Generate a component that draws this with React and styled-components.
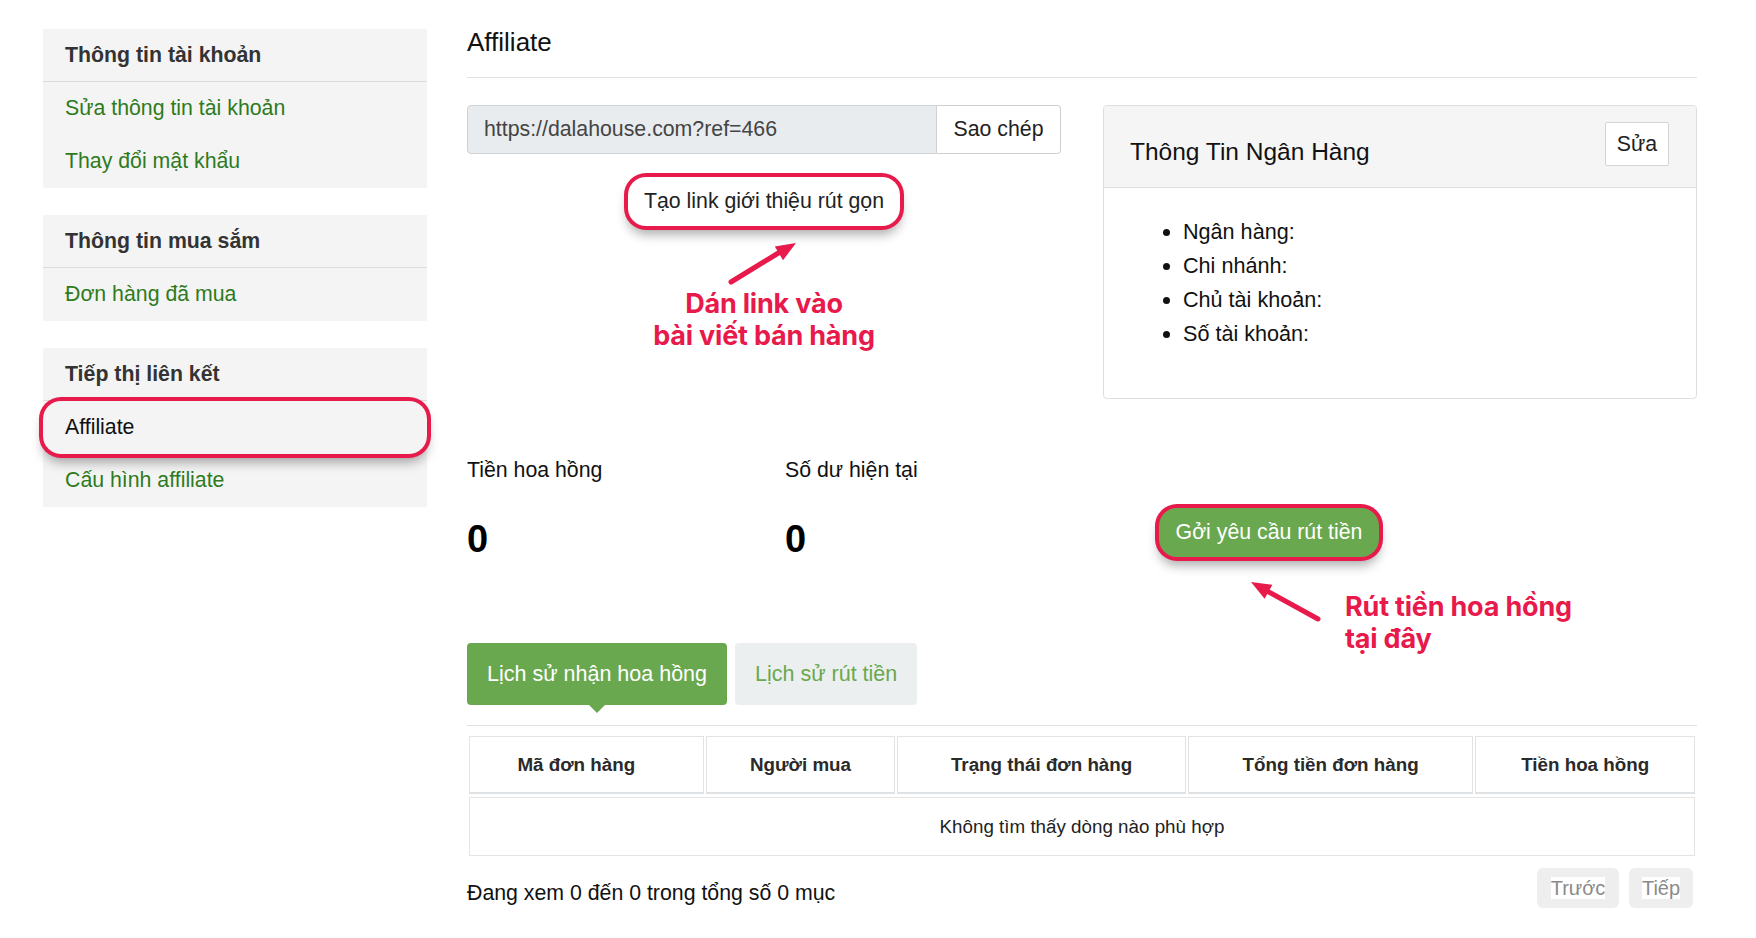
import React from "react";
import styled, { createGlobalStyle, css } from "styled-components";

const RED = "#e8194b";
const GREEN = "#6aa84f";
const LINK_GREEN = "#2e7b1c";
const BASE = "21.3px";

const GlobalStyle = createGlobalStyle`
  body {
    margin: 0;
    background: #fff;
    color: #222;
    font-family: "Liberation Sans", Arial, sans-serif;
  }
`;

const ring = css`
  box-shadow: 0 0 0 4px ${RED}, 0 8px 12px rgba(0, 0, 0, 0.35);
  border-radius: 18px;
`;

const Page = styled.div`
  display: grid;
  grid-template-columns: 384px 1230px;
  gap: 40px;
  padding: 29px 0 0 43px;
`;

/* sidebar */
const Sidebar = styled.aside`
  display: flex;
  flex-direction: column;
  gap: 27px;
`;

const NavPanel = styled.div`
  background: #f4f4f4;
`;

const NavHeader = styled.div`
  height: 53px;
  box-sizing: border-box;
  border-bottom: 1px solid #dcdcdc;
  display: flex;
  align-items: center;
  padding: 0 22px;
  font-size: ${BASE};
  font-weight: 700;
  color: #333;
`;

const NavLink = styled.a`
  height: 53px;
  display: flex;
  align-items: center;
  padding: 0 22px;
  font-size: ${BASE};
  color: ${(p) => (p.$active ? "#111" : LINK_GREEN)};
  text-decoration: none;
  position: relative;
  ${(p) => p.$active && ring}
`;

/* main */
const Main = styled.main`
  display: flex;
  flex-direction: column;
`;

const PageTitle = styled.h1`
  margin: -2px 0 0;
  font-size: 26px;
  font-weight: 400;
  line-height: 30px;
  color: #111;
`;

const Divider = styled.hr`
  border: 0;
  border-top: 1px solid #e2e2e2;
  margin: 20px 0 0;
`;

const TopGrid = styled.section`
  display: grid;
  grid-template-columns: 594px 594px;
  gap: 42px;
  margin-top: 27px;
  align-items: start;
`;

const LinkColumn = styled.div`
  display: flex;
  flex-direction: column;
  align-items: center;
`;

const InputGroup = styled.div`
  display: flex;
  width: 100%;
  height: 49px;
`;

const UrlField = styled.div`
  flex: 1;
  display: flex;
  align-items: center;
  padding: 0 16px;
  background: #e9ecef;
  border: 1px solid #cfd3d6;
  border-radius: 4px 0 0 4px;
  font-size: ${BASE};
  color: #444;
`;

const CopyButton = styled.button`
  width: 124px;
  background: #fff;
  border: 1px solid #cfcfcf;
  border-left: 0;
  border-radius: 0 4px 4px 0;
  font-family: inherit;
  font-size: ${BASE};
  color: #222;
`;

const ShortLinkButton = styled.button`
  margin-top: 23px;
  width: 272px;
  height: 49px;
  background: #fff;
  border: 0;
  font-family: inherit;
  font-size: ${BASE};
  color: #222;
  ${ring}
`;

const Callout = styled.div`
  font-family: Inter, "Liberation Sans", sans-serif;
  font-weight: 700;
  font-size: 27px;
  line-height: 32px;
  color: ${RED};
  text-align: ${(p) => p.$align || "center"};
  letter-spacing: -0.2px;
`;

const ArrowSvg = styled.svg`
  display: block;
  flex: none;
`;

const Arrow = ({ flip }) => (
  <ArrowSvg width="80" height="50" viewBox="0 0 80 50">
    {flip ? (
      <>
        <line x1="73" y1="43" x2="22" y2="15" stroke={RED} strokeWidth="5" strokeLinecap="round" />
        <polygon points="6,6 27.4,8.7 19.6,22.7" fill={RED} />
      </>
    ) : (
      <>
        <line x1="7" y1="44" x2="56" y2="14" stroke={RED} strokeWidth="5" strokeLinecap="round" />
        <polygon points="72,5 59,22.2 50.8,8.4" fill={RED} />
      </>
    )}
  </ArrowSvg>
);

const LinkNote = styled.div`
  display: flex;
  flex-direction: column;
  align-items: center;
  margin-top: 12px;
`;

/* bank card */
const BankCard = styled.div`
  border: 1px solid #dedede;
  border-radius: 4px;
  overflow: hidden;
`;

const CardHeader = styled.div`
  box-sizing: border-box;
  height: 82px;
  background: #f5f5f5;
  border-bottom: 1px solid #dedede;
  display: flex;
  justify-content: space-between;
  align-items: flex-start;
  padding: 16px 27px 0 26px;
`;

const CardTitle = styled.h3`
  margin: 16px 0 0;
  font-size: 24.5px;
  font-weight: 400;
  line-height: 28px;
  color: #111;
`;

const EditButton = styled.button`
  width: 64px;
  height: 44px;
  background: #fff;
  border: 1px solid #d4d4d4;
  border-radius: 2px;
  font-family: inherit;
  font-size: ${BASE};
  color: #222;
`;

const InfoList = styled.ul`
  margin: 0;
  padding: 27px 0 47px 79px;
  font-size: 21.6px;
  line-height: 34px;
  color: #111;
`;

/* stats */
const StatsRow = styled.section`
  display: grid;
  grid-template-columns: 318px 318px 1fr;
  margin-top: 56px;
  align-items: start;
`;

const Stat = styled.div`
  display: flex;
  flex-direction: column;
  gap: 32px;
`;

const StatLabel = styled.span`
  font-size: ${BASE};
  line-height: 30px;
  color: #111;
`;

const StatValue = styled.span`
  font-size: 38px;
  font-weight: 700;
  line-height: 44px;
  color: #000;
`;

const WithdrawCell = styled.div`
  position: relative;
`;

const WithdrawButton = styled.button`
  margin: 53px 0 0 56px;
  width: 220px;
  height: 49px;
  background: ${GREEN};
  border: 0;
  color: #fff;
  font-family: inherit;
  font-size: ${BASE};
  ${ring}
`;

const FloatingNote = styled.div`
  position: absolute;
  left: 142px;
  top: 121px;
  display: flex;
  align-items: flex-start;
  gap: 20px;
  white-space: nowrap;
  & > div {
    margin-top: 15px;
  }
`;

/* tabs */
const TabBar = styled.nav`
  display: flex;
  gap: 8px;
  margin-top: 82px;
  padding-bottom: 20px;
  border-bottom: 1px solid #e0e0e0;
`;

const Tab = styled.button`
  position: relative;
  height: 62px;
  padding: 0 20px;
  border: 0;
  border-radius: 4px;
  font-family: inherit;
  font-size: 21.5px;
  background: ${(p) => (p.$active ? GREEN : "#eceff0")};
  color: ${(p) => (p.$active ? "#fff" : GREEN)};
  ${(p) =>
    p.$active &&
    css`
      &::after {
        content: "";
        position: absolute;
        left: 50%;
        bottom: -8px;
        margin-left: -8px;
        border-left: 8px solid transparent;
        border-right: 8px solid transparent;
        border-top: 8px solid ${GREEN};
      }
    `}
`;

/* table */
const Table = styled.table`
  width: 100%;
  margin-top: 7px;
  border-collapse: separate;
  border-spacing: 2px 3px;
  font-size: 18.8px;
  color: #222;
`;

const Th = styled.th`
  height: 58px;
  box-sizing: border-box;
  width: ${(p) => p.$w}px;
  padding: 0 ${(p) => p.$pr || 4}px 0 4px;
  border: 1px solid #e3e3e3;
  border-bottom: 2px solid #dfe2e5;
  font-weight: 700;
  color: #2a2a2a;
`;

const Td = styled.td`
  height: 59px;
  box-sizing: border-box;
  border: 1px solid #e3e3e3;
  text-align: center;
`;

const Footer = styled.div`
  display: flex;
  justify-content: space-between;
  align-items: center;
  margin-top: 9px;
  padding-right: 4px;
`;

const FooterText = styled.span`
  font-size: ${BASE};
  color: #111;
  margin-top: 10px;
`;

const Pager = styled.div`
  display: flex;
  gap: 10px;
`;

const PagerButton = styled.button`
  height: 40px;
  width: ${(p) => p.$w}px;
  padding: 0;
  background: #eeeeee;
  border: 0;
  border-radius: 6px;
  font-family: inherit;
  font-size: 20px;
  color: #8a8a8a;
  span {
    background: #fff;
  }
`;

const columns = [
  ["Mã đơn hàng", 235, 24],
  ["Người mua", 190],
  ["Trạng thái đơn hàng", 289],
  ["Tổng tiền đơn hàng", 286],
  ["Tiền hoa hồng", 220],
];

export default function App() {
  return (
    <>
      <GlobalStyle />
      <Page>
        <Sidebar>
          <NavPanel>
            <NavHeader>Thông tin tài khoản</NavHeader>
            <NavLink href="#">Sửa thông tin tài khoản</NavLink>
            <NavLink href="#">Thay đổi mật khẩu</NavLink>
          </NavPanel>
          <NavPanel>
            <NavHeader>Thông tin mua sắm</NavHeader>
            <NavLink href="#">Đơn hàng đã mua</NavLink>
          </NavPanel>
          <NavPanel>
            <NavHeader>Tiếp thị liên kết</NavHeader>
            <NavLink href="#" $active>
              Affiliate
            </NavLink>
            <NavLink href="#">Cấu hình affiliate</NavLink>
          </NavPanel>
        </Sidebar>

        <Main>
          <PageTitle>Affiliate</PageTitle>
          <Divider />

          <TopGrid>
            <LinkColumn>
              <InputGroup>
                <UrlField>https://dalahouse.com?ref=466</UrlField>
                <CopyButton>Sao chép</CopyButton>
              </InputGroup>
              <ShortLinkButton>Tạo link giới thiệu rút gọn</ShortLinkButton>
              <LinkNote>
                <Arrow />
                <Callout>
                  Dán link vào
                  <br />
                  bài viết bán hàng
                </Callout>
              </LinkNote>
            </LinkColumn>

            <BankCard>
              <CardHeader>
                <CardTitle>Thông Tin Ngân Hàng</CardTitle>
                <EditButton>Sửa</EditButton>
              </CardHeader>
              <InfoList>
                <li>Ngân hàng:</li>
                <li>Chi nhánh:</li>
                <li>Chủ tài khoản:</li>
                <li>Số tài khoản:</li>
              </InfoList>
            </BankCard>
          </TopGrid>

          <StatsRow>
            <Stat>
              <StatLabel>Tiền hoa hồng</StatLabel>
              <StatValue>0</StatValue>
            </Stat>
            <Stat>
              <StatLabel>Số dư hiện tại</StatLabel>
              <StatValue>0</StatValue>
            </Stat>
            <WithdrawCell>
              <WithdrawButton>Gởi yêu cầu rút tiền</WithdrawButton>
              <FloatingNote>
                <Arrow flip />
                <Callout $align="left">
                  Rút tiền hoa hồng
                  <br />
                  tại đây
                </Callout>
              </FloatingNote>
            </WithdrawCell>
          </StatsRow>

          <TabBar>
            <Tab $active>Lịch sử nhận hoa hồng</Tab>
            <Tab>Lịch sử rút tiền</Tab>
          </TabBar>

          <Table>
            <thead>
              <tr>
                {columns.map(([label, w, pr]) => (
                  <Th key={label} $w={w} $pr={pr}>
                    {label}
                  </Th>
                ))}
              </tr>
            </thead>
            <tbody>
              <tr>
                <Td colSpan={5}>Không tìm thấy dòng nào phù hợp</Td>
              </tr>
            </tbody>
          </Table>

          <Footer>
            <FooterText>Đang xem 0 đến 0 trong tổng số 0 mục</FooterText>
            <Pager>
              <PagerButton $w={82}>
                <span>Trước</span>
              </PagerButton>
              <PagerButton $w={64}>
                <span>Tiếp</span>
              </PagerButton>
            </Pager>
          </Footer>
        </Main>
      </Page>
    </>
  );
}
